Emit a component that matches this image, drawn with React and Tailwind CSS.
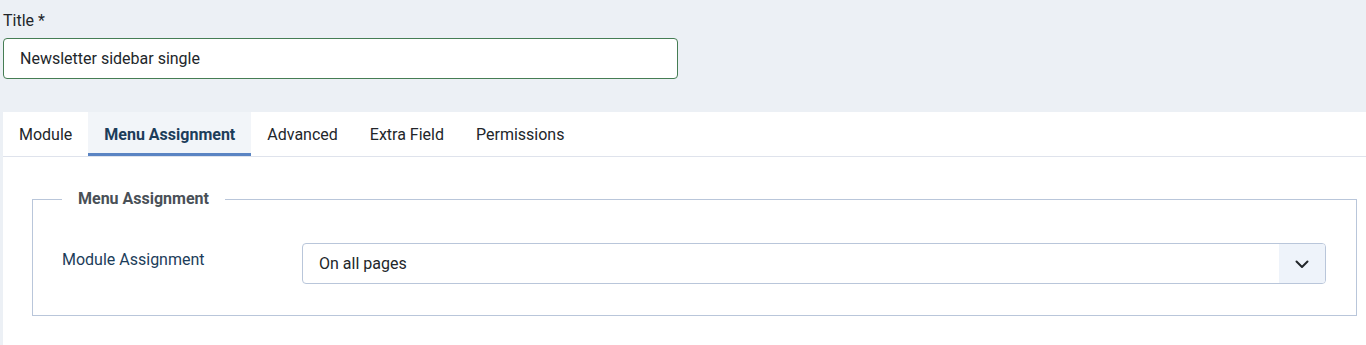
export default function App() {
  const tabs = ["Module", "Menu Assignment", "Advanced", "Extra Field", "Permissions"];
  return (
    <div className="w-full h-[345px] overflow-hidden bg-[#ecf0f5] font-['Roboto',sans-serif] text-[16px] text-[#22262a]">
      <div className="pl-[3px] pt-[9px]">
        <label className="block leading-[24px] text-[#22262a]">Title *</label>
        <div className="mt-[5px] h-[41px] w-[675px] rounded-[4px] border border-[#457d54] bg-white pl-[16px] pt-[1px] flex items-center text-[#22262a]">
          Newsletter sidebar single
        </div>
      </div>
      <div className="ml-[3px] mt-[33px] bg-white">
        <div className="flex h-[45px] border-b border-[#dfe3ec]">
          {tabs.map((t) =>
            t === "Menu Assignment" ? (
              <div
                key={t}
                className="px-[16px] flex items-center font-bold text-[#1c3d5a] bg-[#f2f5f9] border-b-[3px] border-[#5a84c3] mb-[-1px] h-[44px] pt-[5px]"
              >
                {t}
              </div>
            ) : (
              <div key={t} className="px-[16px] flex items-center text-[#22262a] h-[44px] pt-[2px]">
                {t}
              </div>
            )
          )}
        </div>
        <div className="pt-[30px] pl-[29px] pr-[9px] pb-[30px]">
          <fieldset className="border border-[#b9c6da] pl-[29px] pr-[30px] pt-[32px] pb-[31px] m-0 min-w-0">
            <legend className="px-[16px] font-bold leading-[24px] text-[#495057]">Menu Assignment</legend>
            <div className="flex">
              <div className="w-[240px] pt-[5px] leading-[24px] text-[#1c3d5a]">Module Assignment</div>
              <div className="flex-1 h-[41px] rounded-[4px] border border-[#b9c6da] flex items-stretch overflow-hidden">
                <div className="flex-1 flex items-center pl-[16px] text-[#22262a]">On all pages</div>
                <div className="w-[46px] bg-[#eef3fa] flex items-center justify-center">
                  <svg width="16" height="16" viewBox="0 0 16 16" fill="none">
                    <path d="M2.5 5.5 L8 11 L13.5 5.5" stroke="#22262a" strokeWidth="2" strokeLinecap="round" strokeLinejoin="round" />
                  </svg>
                </div>
              </div>
            </div>
          </fieldset>
        </div>
      </div>
    </div>
  );
}
